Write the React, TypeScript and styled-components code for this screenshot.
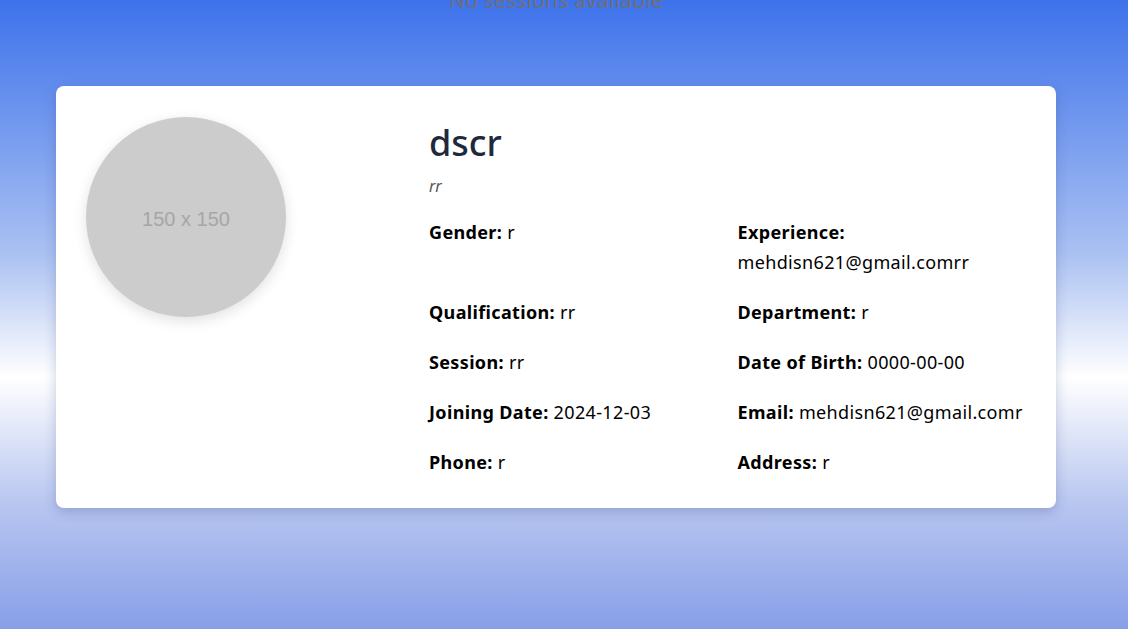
import React from "react";
import styled, { createGlobalStyle } from "styled-components";

const Global = createGlobalStyle`
  html, body { margin: 0; padding: 0; }
  body { font-family: "Noto Sans", "Open Sans", sans-serif; }
`;

const Page = styled.div`
  width: 1128px;
  height: 629px;
  overflow: hidden;
  background: linear-gradient(to bottom, #3d72eb 0%, #a9c0f2 40%, #ffffff 60%, #b8c6f0 80%, #889fe8 100%);
`;

const Notice = styled.p`
  margin: -14px 0 0;
  width: 1112px;
  text-align: center;
  font-size: 21px;
  line-height: 28px;
  letter-spacing: 0.2px;
  color: #6f6f78;
`;

const Card = styled.section`
  margin: 72px 0 0 56px;
  width: 1000px;
  box-sizing: border-box;
  background: #fff;
  border-radius: 8px;
  padding: 31px 30px 31px;
  display: flex;
  gap: 30px;
  box-shadow: 0 4px 12px rgba(40, 60, 120, 0.25);
`;

const AvatarCol = styled.div`
  width: 313px;
  flex-shrink: 0;
`;

const Avatar = styled.div`
  width: 200px;
  height: 200px;
  box-sizing: border-box;
  padding-top: 5px;
  border-radius: 50%;
  background: #cccccc;
  display: flex;
  align-items: center;
  justify-content: center;
  font-family: "Liberation Sans", Arial, sans-serif;
  font-size: 20px;
  color: #a6a6a6;
  box-shadow: 0 4px 14px rgba(0, 0, 0, 0.12);
`;

const Info = styled.div`
  flex: 1;
`;

const Name = styled.h1`
  margin: 2px 0 0;
  font-size: 36px;
  line-height: 48px;
  font-weight: 500;
  color: #1e293b;
`;

const Subtitle = styled.p`
  margin: 8px 0 0;
  font-size: 16px;
  line-height: 22px;
  font-style: italic;
  color: #555;
`;

const Grid = styled.div`
  margin-top: 20px;
  display: grid;
  grid-template-columns: 1fr 1fr;
  column-gap: 20px;
  row-gap: 20px;
`;

const Field = styled.p`
  margin: 0;
  font-size: 18px;
  line-height: 30px;
  letter-spacing: 0.35px;
  color: #000;
`;

const Label = styled.strong`
  font-weight: 700;
`;

const fields: [string, string][] = [
  ["Gender", "r"],
  ["Experience", "mehdisn621@gmail.comrr"],
  ["Qualification", "rr"],
  ["Department", "r"],
  ["Session", "rr"],
  ["Date of Birth", "0000-00-00"],
  ["Joining Date", "2024-12-03"],
  ["Email", "mehdisn621@gmail.comr"],
  ["Phone", "r"],
  ["Address", "r"],
];

export default function App() {
  return (
    <>
      <Global />
      <Page>
        <Notice>No sessions available</Notice>
        <Card>
          <AvatarCol>
            <Avatar>150 x 150</Avatar>
          </AvatarCol>
          <Info>
            <Name>dscr</Name>
            <Subtitle>rr</Subtitle>
            <Grid>
              {fields.map(([k, v]) => (
                <Field key={k}>
                  <Label>{k}:</Label> {v}
                </Field>
              ))}
            </Grid>
          </Info>
        </Card>
      </Page>
    </>
  );
}
